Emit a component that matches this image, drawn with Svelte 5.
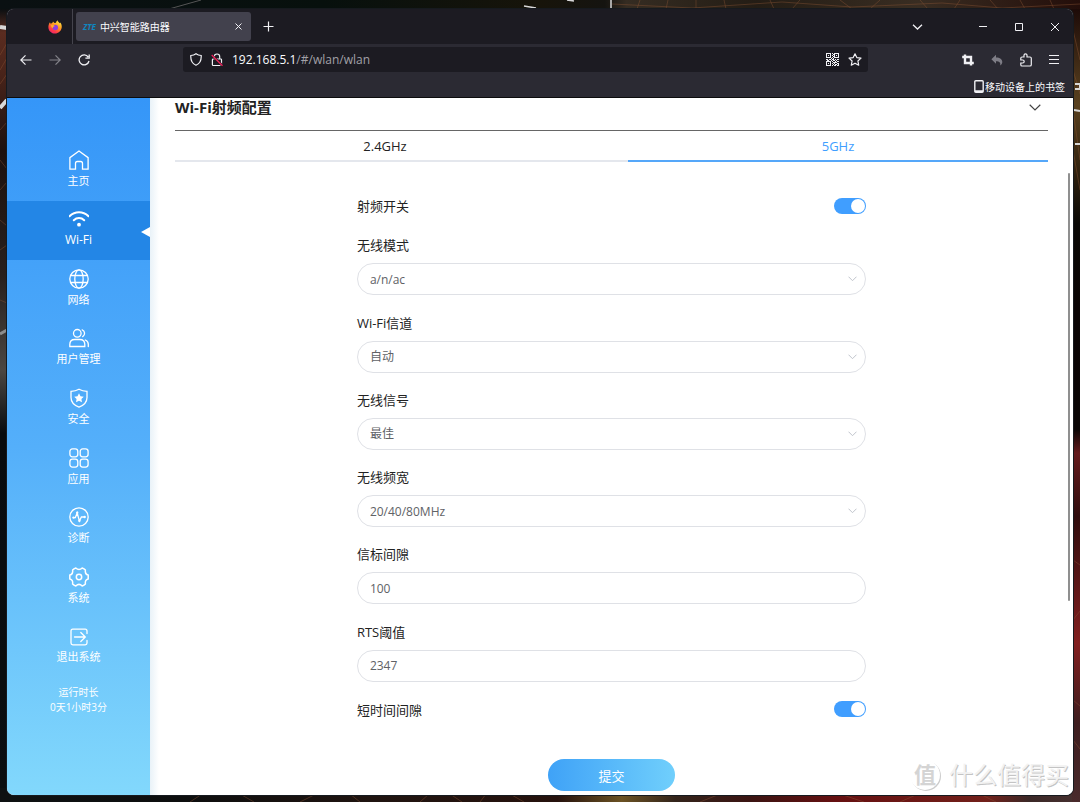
<script>
  const menu = [
    { id: 'home', label: '主页' },
    { id: 'wifi', label: 'Wi-Fi' },
    { id: 'network', label: '网络' },
    { id: 'users', label: '用户管理' },
    { id: 'security', label: '安全' },
    { id: 'apps', label: '应用' },
    { id: 'diagnose', label: '诊断' },
    { id: 'system', label: '系统' },
    { id: 'logout', label: '退出系统' }
  ];

  const bands = ['2.4GHz', '5GHz'];

  const fields = [
    { id: 'mode', label: '无线模式', options: ['a/n/ac', 'a only', 'a/n'] },
    { id: 'channel', label: 'Wi-Fi信道', options: ['自动', '36', '40', '44', '48'] },
    { id: 'signal', label: '无线信号', options: ['最佳', '标准', '节能'] },
    { id: 'width', label: '无线频宽', options: ['20/40/80MHz', '20/40MHz', '20MHz'] },
    { id: 'beacon', label: '信标间隙' },
    { id: 'rts', label: 'RTS阈值' }
  ];

  let page = $state('wifi');
  let band = $state('5GHz');
  let values = $state({
    radio: true,
    mode: 'a/n/ac',
    channel: '自动',
    signal: '最佳',
    width: '20/40/80MHz',
    beacon: '100',
    rts: '2347',
    shortGap: true
  });

  // modules of the QR glyph, one string per row
  const qr = [
    '1111101011111',
    '1000100110001',
    '1010101010101',
    '1000100110001',
    '1111101011111',
    '0000010100000',
    '1101101101011',
    '0110010110100',
    '1111101001011',
    '1000100111100',
    '1010101010011',
    '1000100101101',
    '1111101011011'
  ];
</script>

<div class="desktop">
  <svg class="wallpaper" viewBox="0 0 1080 802" preserveAspectRatio="none" aria-hidden="true">
    <defs>
      <linearGradient id="wp-top">
        <stop offset="0" stop-color="#0a1012" />
        <stop offset=".3" stop-color="#07100d" />
        <stop offset=".5" stop-color="#17140a" />
        <stop offset=".56" stop-color="#151410" />
        <stop offset=".58" stop-color="#352c22" />
        <stop offset=".7" stop-color="#241d15" />
        <stop offset=".85" stop-color="#392d22" />
        <stop offset="1" stop-color="#240e0a" />
      </linearGradient>
      <linearGradient id="wp-left" x2="0" y2="1">
        <stop offset="0" stop-color="#0b0f11" />
        <stop offset=".03" stop-color="#5a2c20" />
        <stop offset=".08" stop-color="#4a241a" />
        <stop offset=".18" stop-color="#1d110e" />
        <stop offset=".34" stop-color="#28201d" />
        <stop offset=".46" stop-color="#4b4642" />
        <stop offset=".54" stop-color="#080b0e" />
        <stop offset="1" stop-color="#0b0e10" />
      </linearGradient>
      <linearGradient id="wp-right" x2="0" y2="1">
        <stop offset="0" stop-color="#1d0b08" />
        <stop offset=".12" stop-color="#5a4220" />
        <stop offset=".2" stop-color="#33230f" />
        <stop offset=".27" stop-color="#0b0906" />
        <stop offset=".38" stop-color="#0a0404" />
        <stop offset=".53" stop-color="#0a0505" />
        <stop offset=".56" stop-color="#651b1d" />
        <stop offset=".64" stop-color="#300d0e" />
        <stop offset=".8" stop-color="#821f1f" />
        <stop offset=".9" stop-color="#3e1e20" />
        <stop offset="1" stop-color="#492a2b" />
      </linearGradient>
      <linearGradient id="wp-bottom">
        <stop offset="0" stop-color="#0e1112" />
        <stop offset=".17" stop-color="#0d0e0e" />
        <stop offset=".35" stop-color="#201410" />
        <stop offset=".52" stop-color="#26120d" />
        <stop offset=".58" stop-color="#6b5223" />
        <stop offset=".63" stop-color="#33241b" />
        <stop offset=".7" stop-color="#3b1412" />
        <stop offset=".78" stop-color="#661011" />
        <stop offset=".92" stop-color="#72201a" />
        <stop offset=".96" stop-color="#3b2827" />
        <stop offset="1" stop-color="#452f2e" />
      </linearGradient>
    </defs>
    <rect width="1080" height="20" fill="url(#wp-top)" />
    <rect y="9" width="14" height="786" fill="url(#wp-left)" />
    <rect x="1060" y="9" width="20" height="793" fill="url(#wp-right)" />
    <rect y="788" width="1072" height="14" fill="url(#wp-bottom)" />
    <g fill="none" stroke="#8c5535" stroke-width=".6" opacity=".7">
      <path d="M612 4l80 4 90-6 70 5 90-4 60 5 78-4M640 0l-3 9M668 0l-2 9M696 0v9M724 0l2 9M770 0l4 9M800 0l-8 9M840 0l12 9M880 0l-10 9M920 0l8 9M960 0l-6 9M990 0l8 9M1020 0l5 9M1050 0l4 9" />
      <path d="M0 55l7-12M0 70l7-12M0 84l7-10M0 130l7-8M0 160l7 9M0 190l7-8M0 220l7 6M0 250l7-5M0 300l7 3M1073 30l7 30M1073 70l7 24M1073 110l7 50M1073 150l7 40M1073 560l7 5M1073 620l7-9M1073 700l7 6M1073 740l7 9" />
      <path d="M190 802l12-8M240 794l14 8M300 802l16-8M350 794l10 8M420 802l9-8M450 794l12 8M480 802l6-8M510 794l14 8M700 802l20-8M840 794l24 8M900 802l18-8M980 794l16 8" />
    </g>
    <g fill="none" stroke="#d8d8d8">
      <path d="M169 9l32-9" stroke="#555" />
      <path d="M524 6l12 2M567 0l7 1M611 0v9" stroke-width="1.5" />
      <path d="M0 27l7 1M0 108l7-8" stroke-width="4" />
      <path d="M0 334l7-4" stroke="#8c8c8c" stroke-width="3" />
      <path d="M1074 110l6 1M1075 144h5M1075 84h5v5h-5" stroke-width="2" />
    </g>
  </svg>

  <div class="window">
    <header class="browser">
      <div class="tab-strip">
        <div class="firefox-slot">
          <svg width="14" height="14" viewBox="0 0 14 14" aria-hidden="true">
            <defs>
              <linearGradient id="fx" x1=".8" y1="0" x2=".2" y2="1">
                <stop offset="0" stop-color="#fff04a" />
                <stop offset=".4" stop-color="#ff9a1f" />
                <stop offset=".75" stop-color="#ff3b47" />
                <stop offset="1" stop-color="#e81f78" />
              </linearGradient>
            </defs>
            <path d="M2 2.2l.6 1.5L4.300 3l.7-1.6 1.500 1.700L8 2.800C8.200 1.700 8.900.6 9.600.2c0 1.300 1.400 2 2.100 3l.5-.8C13.400 3.800 14 5.600 13.700 7.600 13.200 11.200 10.400 13.600 7 13.600S.5 11 .4 7.500C.3 5.500.9 3.500 2 2.200z" fill="url(#fx)" />
            <circle cx="7.300" cy="7.500" r="2.700" fill="#8b3fe0" />
            <path d="M3 5.200c1.700-.6 3 0 4 1.100-1.500-.1-2.200.8-1.900 1.900-1.300-.4-2-1.500-2.100-3z" fill="#ffb02a" />
          </svg>
        </div>
        <div class="tab">
          <span class="favicon">ZTE</span>
          <span class="tab-title">中兴智能路由器</span>
          <button class="icon-button" aria-label="关闭标签页">
            <svg width="7" height="7" viewBox="0 0 7 7"><path d="M.5.5l6 6M6.500.5l-6 6" /></svg>
          </button>
        </div>
        <button class="icon-button new-tab" aria-label="新建标签页">
          <svg width="11" height="11" viewBox="0 0 11 11"><path d="M5.500.5v10M.5 5.500h10" stroke-width="1.200" /></svg>
        </button>
        <div class="window-buttons">
          <button class="icon-button list-tabs" aria-label="列出所有标签页">
            <svg width="11" height="6" viewBox="0 0 11 6"><path d="M1 .7l4.500 4.300L10 .7" stroke-width="1.300" /></svg>
          </button>
          <button class="icon-button" aria-label="最小化">
            <svg width="8" height="8" viewBox="0 0 8 8"><path d="M0 3.500h8" /></svg>
          </button>
          <button class="icon-button" aria-label="最大化">
            <svg width="8" height="8" viewBox="0 0 8 8"><path d="M.5.5h7v7h-7z" /></svg>
          </button>
          <button class="icon-button" aria-label="关闭">
            <svg width="8" height="8" viewBox="0 0 8 8"><path d="M0 0l8 8M8 0L0 8" /></svg>
          </button>
        </div>
      </div>

      <div class="nav-bar">
        <div class="nav-buttons">
          <button class="icon-button" aria-label="后退">
            <svg width="12" height="12" viewBox="0 0 12 12"><path d="M11.500 6H1M5.500 1.300L.8 6l4.700 4.700" stroke-width="1.200" /></svg>
          </button>
          <button class="icon-button" aria-label="前进" disabled>
            <svg width="12" height="12" viewBox="0 0 12 12"><path d="M.5 6H11M6.500 1.300L11.200 6l-4.700 4.700" stroke-width="1.200" /></svg>
          </button>
          <button class="icon-button" aria-label="刷新">
            <svg width="12" height="12" viewBox="0 0 12 12"><path d="M10.200 3A5 5 0 1 0 11 7M11.200.4v3.800H7.400" stroke-width="1.300" /></svg>
          </button>
        </div>
        <div class="url-bar">
          <svg width="12" height="13" viewBox="0 0 12 13" aria-hidden="true"><path d="M6 .7c1.500 1.200 3.200 1.700 5.200 1.800C11.500 7.500 9.600 10.900 6 12.300 2.400 10.900.5 7.500.8 2.500 2.800 2.400 4.500 1.900 6 .7z" stroke-width="1.200" /></svg>
          <svg width="12" height="14" viewBox="0 0 12 14" aria-hidden="true">
            <path d="M3.300 6V3.700a2.700 2.700 0 0 1 5.400 0V6M2.200 6h7.600q.7 0 .7.700v5q0 .8-.7.800H2.200q-.8 0-.8-.8v-5q0-.7.8-.7z" stroke-width="1.200" />
            <path d="M.7 2l10.800 10.800" stroke="#1c1b22" stroke-width="2.400" />
            <path d="M.7 2l10.800 10.800" stroke="#f0215a" stroke-width="1.300" />
          </svg>
          <span class="url">192.168.5.1<span>/#/wlan/wlan</span></span>
          <svg class="qr" width="13" height="13" viewBox="0 0 13 13" aria-hidden="true">
            {#each qr as row, y}
              {#each row as cell, x}
                {#if cell === '1'}<rect {x} {y} width="1" height="1" />{/if}
              {/each}
            {/each}
          </svg>
          <svg width="14" height="13" viewBox="0 0 14 13" aria-hidden="true"><path d="M7 .8l1.800 3.800 4.200.5L9.900 8l.8 4.200L7 10.200l-3.700 2L4.100 8 1 5.100l4.200-.5z" stroke-width="1.200" stroke-linejoin="round" /></svg>
        </div>
        <div class="tools">
          <button class="icon-button" aria-label="截图">
            <svg width="12" height="12" viewBox="0 0 12 12"><path d="M3 .5V9h8.800M.2 3H9v8.600" stroke-width="2.400" /></svg>
          </button>
          <button class="icon-button" aria-label="撤销" disabled>
            <svg width="12" height="12" viewBox="0 0 12 12"><path d="M5 .8v2.700c4 0 6.300 2 6.300 4.600 0 1.500-.8 2.700-2.100 3.300.6-3-1-4.200-4.200-4.200v2.600L.4 5.300z" fill="#7e7d86" stroke="none" /></svg>
          </button>
          <button class="icon-button" aria-label="扩展">
            <svg width="12" height="14" viewBox="0 0 12 14"><path d="M4 4V2.300a1.500 1.500 0 0 1 3 0V4h3q1.300 0 1.300 1.300v6.400q0 1.300-1.300 1.300H2Q.8 13 .8 11.700V10h1.900a1.500 1.500 0 0 0 0-3H.8V5.300Q.8 4 2 4z" stroke-width="1.200" /></svg>
          </button>
          <button class="icon-button" aria-label="菜单">
            <svg width="10" height="9" viewBox="0 0 10 9"><path d="M0 .5h10M0 4.500h10M0 8.500h10" /></svg>
          </button>
        </div>
      </div>

      <div class="bookmarks">
        <a href="#bookmarks">
          <svg width="10" height="13" viewBox="0 0 10 13" aria-hidden="true"><path d="M1.800.8h6.400q1 0 1 1v9.400q0 1-1 1H1.800q-1 0-1-1V1.800q0-1 1-1zM1 11h8" stroke-width="1.400" /></svg>
          移动设备上的书签
        </a>
      </div>
    </header>

    <div class="page">
      <aside>
        <nav>
          {#each menu as item}
            <a href="#{item.id}" class:active={page === item.id} onclick={() => (page = item.id)}>
              <svg width="20" height="20" viewBox="0 0 20 20" aria-hidden="true">
                {#if item.id === 'home'}
                  <path d="M10 1L.9 7.600v11.600h5.600v-5.700q0-2 1.800-2h3.400q1.800 0 1.800 2v5.700h5.600V7.600z" />
                {:else if item.id === 'wifi'}
                  <path d="M.5 7.200C6 1.800 14 1.800 19.500 7.200M4.800 11.200c3-2.900 7.400-2.900 10.400 0" stroke-width="2" />
                  <circle class="solid" cx="10" cy="15.700" r="1.900" />
                {:else if item.id === 'network'}
                  <circle cx="10" cy="10" r="9.200" />
                  <ellipse cx="10" cy="10" rx="4.200" ry="9.200" />
                  <path d="M1.600 6.500h16.800M1.600 13.500h16.800" />
                {:else if item.id === 'users'}
                  <circle cx="8.300" cy="5.300" r="3.800" />
                  <path d="M.8 18.500v-2q0-5 5-5h5q5 0 5 5v2zM13.200 1.800a3.800 3.800 0 0 1 .5 6.800M16.300 12q3 1.300 3 4.300v2.200" />
                {:else if item.id === 'security'}
                  <path d="M10 1.200q3.500 2 8 2.200v6q0 6.500-8 9.700Q2 15.900 2 9.400v-6q4.500-.2 8-2.200z" />
                  <path class="solid" d="M10 5.200l1.500 3 3.300.5-2.400 2.300.6 3.300L10 12.700l-3 1.600.6-3.300-2.400-2.300 3.300-.5z" />
                {:else if item.id === 'apps'}
                  <rect x=".9" y=".9" width="7.900" height="7.900" rx="2.500" />
                  <rect x="11.200" y=".9" width="7.900" height="7.900" rx="2.500" />
                  <rect x=".9" y="11.200" width="7.900" height="7.900" rx="2.500" />
                  <rect x="11.200" y="11.200" width="7.900" height="7.900" rx="2.500" />
                {:else if item.id === 'diagnose'}
                  <circle cx="10" cy="10" r="9.200" />
                  <path d="M4.500 10.600h1.800L8.200 6l2.200 8 2-4h3" />
                  <g class="solid">
                    <circle cx="4.500" cy="10.600" r="1.200" />
                    <circle cx="8.200" cy="5.800" r="1.200" />
                    <circle cx="10.400" cy="13.800" r="1.200" />
                    <circle cx="15.700" cy="10" r="1.200" />
                  </g>
                {:else if item.id === 'system'}
                  <path d="M6.800 1Q10 4.200 13.200 1q2 .6 3.200 2-.7 4.200 2.800 5v4q-3.500.8-2.800 5-1.200 1.400-3.200 2-3.200-3.200-6.400 0-2-.6-3.200-2 .7-4.200-2.800-5V8q3.500-.8 2.800-5Q4.800 1.600 6.800 1z" stroke-width="1.500" stroke-linejoin="round" />
                  <circle cx="10" cy="10" r="2.700" stroke-width="1.500" />
                {:else}
                  <path d="M18 7.500V5q0-1.800-1.800-1.800H3.800Q2 3.200 2 5v12q0 1.800 1.800 1.800h12.400Q18 18.800 18 17v-2.500M5.500 11h10.500M11.800 6.500l4.500 4.500-4.500 4.500" />
                {/if}
              </svg>
              <span>{item.label}</span>
            </a>
          {/each}
        </nav>
        <p>运行时长<br />0天1小时3分</p>
      </aside>

      <main>
        <div class="section-title">
          <h1>Wi-Fi射频配置</h1>
          <button class="collapse" aria-label="折叠">
            <svg width="12" height="7" viewBox="0 0 12 7"><path d="M.7.8L6 6 11.300.8" /></svg>
          </button>
        </div>

        <div class="bands" role="tablist">
          {#each bands as name}
            <button role="tab" aria-selected={band === name} class:active={band === name} onclick={() => (band = name)}>
              {name}
            </button>
          {/each}
        </div>

        <form onsubmit={(e) => e.preventDefault()}>
          <div class="rows">
            <div class="switch-row">
              <label for="radio">射频开关</label>
              <input id="radio" type="checkbox" bind:checked={values.radio} />
            </div>
            {#each fields as field}
              <div class="field">
                <label for={field.id}>{field.label}</label>
                {#if field.options}
                  <div class="select-box">
                    <select id={field.id} bind:value={values[field.id]}>
                      {#each field.options as option}
                        <option>{option}</option>
                      {/each}
                    </select>
                    <svg width="9" height="6" viewBox="0 0 9 6" aria-hidden="true"><path d="M.5.7l4 4 4-4" /></svg>
                  </div>
                {:else}
                  <input id={field.id} type="text" bind:value={values[field.id]} />
                {/if}
              </div>
            {/each}
            <div class="switch-row">
              <label for="shortGap">短时间间隙</label>
              <input id="shortGap" type="checkbox" bind:checked={values.shortGap} />
            </div>
          </div>
          <button class="submit" type="submit">提交</button>
        </form>

        <div class="scroll-thumb"></div>
        <div class="watermark"><span class="seal">值</span>什么值得买</div>
      </main>
    </div>
  </div>
</div>

<style>
  :global(body) {
    margin: 0;
    background: #0b0e10;
  }

  .desktop {
    position: relative;
    box-sizing: border-box;
    min-height: 100vh;
    padding: 9px 7px 7px;
    display: flex;
    font-family: 'Open Sans', 'Noto Sans CJK SC', sans-serif;
    font-size: 13px;
    color: #222;
  }

  .wallpaper {
    position: absolute;
    inset: 0;
    width: 100%;
    height: 100%;
  }

  .window {
    position: relative;
    flex: 1;
    min-width: 0;
    display: flex;
    flex-direction: column;
    border-radius: 7px;
    overflow: hidden;
    background: #fff;
    box-shadow: 0 0 0 1px #161a1f;
  }

  button {
    font: inherit;
    border: 0;
    padding: 0;
    background: none;
    cursor: pointer;
  }

  svg {
    display: block;
    flex: none;
  }

  /* browser chrome */
  .browser {
    background: #2b2a33;
    color: #fbfbfe;
    border-bottom: 1px solid #0c0c0d;
  }

  .browser svg {
    fill: none;
    stroke: #f0f0f4;
  }

  .browser .firefox-slot svg,
  .browser .qr {
    stroke: none;
  }

  .browser .qr {
    fill: #f0f0f4;
  }

  .tab-strip {
    display: flex;
    align-items: center;
    height: 35px;
    background: #1c1b22;
  }

  .firefox-slot {
    box-sizing: border-box;
    width: 66px;
    height: 35px;
    padding-left: 41px;
    display: flex;
    align-items: center;
    border-right: 1px solid #45444d;
  }

  .tab {
    box-sizing: border-box;
    width: 175px;
    height: 29px;
    margin-left: 3px;
    padding: 0 9px 0 7px;
    display: flex;
    align-items: center;
    gap: 4px;
    border-radius: 3px;
    background: #42414d;
  }

  .favicon {
    font-size: 8px;
    font-weight: 700;
    font-style: italic;
    color: #0f86c0;
  }

  .tab-title {
    flex: 1;
    font-size: 10px;
    white-space: nowrap;
  }

  .new-tab {
    margin-left: 12px;
  }

  .icon-button {
    display: flex;
    align-items: center;
    justify-content: center;
  }

  .icon-button:disabled {
    opacity: 0.45;
  }

  .tools .icon-button:disabled {
    opacity: 1;
  }

  .window-buttons {
    display: flex;
    margin-left: auto;
  }

  .window-buttons .icon-button {
    width: 36px;
    height: 35px;
  }

  .window-buttons .list-tabs {
    margin-right: 30px;
  }

  .nav-bar {
    display: flex;
    align-items: center;
    height: 31px;
  }

  .nav-buttons {
    box-sizing: border-box;
    width: 176px;
    padding-left: 13px;
    display: flex;
    gap: 17px;
  }

  .url-bar {
    flex: 1;
    box-sizing: border-box;
    height: 25px;
    padding: 0 6px 0 7px;
    display: flex;
    align-items: center;
    gap: 9px;
    border-radius: 3px;
    background: #1c1b22;
  }

  .url {
    flex: 1;
    font-size: 12px;
  }

  .url span {
    color: #a2a1a8;
  }

  .tools {
    box-sizing: border-box;
    width: 205px;
    padding-right: 14px;
    display: flex;
    align-items: center;
    justify-content: flex-end;
    gap: 17px;
  }

  .bookmarks {
    display: flex;
    justify-content: flex-end;
    align-items: center;
    height: 22px;
    padding-right: 8px;
  }

  .bookmarks a {
    display: flex;
    align-items: center;
    gap: 1px;
    font-size: 10px;
    color: inherit;
    text-decoration: none;
  }

  /* router page */
  .page {
    flex: 1;
    display: flex;
  }

  aside {
    width: 143px;
    background: linear-gradient(#3596f8, #54affa 50%, #82d8fc);
    color: #fff;
    text-align: center;
  }

  nav {
    display: grid;
    grid-auto-rows: 1fr;
    min-height: 536px;
    padding-top: 43px;
  }

  nav a {
    position: relative;
    display: flex;
    flex-direction: column;
    align-items: center;
    justify-content: center;
    gap: 3px;
    padding-bottom: 3px;
    font-size: 11px;
    line-height: 16px;
    color: inherit;
    text-decoration: none;
  }

  nav svg {
    fill: none;
    stroke: #fff;
    stroke-width: 1.3;
    stroke-linecap: round;
  }

  nav svg .solid {
    fill: #fff;
    stroke: none;
  }

  nav a.active {
    background: #2386e6;
    font-size: 12px;
  }

  nav a.active::after {
    content: '';
    position: absolute;
    right: 0;
    top: 26px;
    border: 5px solid transparent;
    border-right: 9px solid #fff;
    border-left: 0;
  }

  aside p {
    margin: 8px 0 0;
    font-size: 10px;
    line-height: 15px;
  }

  main {
    position: relative;
    flex: 1;
    display: flex;
    flex-direction: column;
    padding: 0 25px 4px;
    background: linear-gradient(90deg, #e9f2f8, #fff 9px);
  }

  .section-title {
    display: flex;
    justify-content: space-between;
    align-items: center;
    height: 32px;
    padding-right: 7px;
    border-bottom: 1px solid #666;
  }

  .section-title h1 {
    margin: 0 0 14px;
    font-size: 15px;
    line-height: 20px;
    font-weight: 700;
  }

  .collapse {
    margin-bottom: 14px;
  }

  .collapse svg {
    fill: none;
    stroke: #444;
    stroke-width: 1.2;
  }

  .bands {
    display: flex;
    gap: 33px;
    box-shadow: inset 0 -2px #e4e7ed;
  }

  .bands button {
    flex: 1;
    height: 31px;
    padding-top: 1px;
    border-bottom: 2px solid transparent;
    line-height: 18px;
    color: #222;
  }

  .bands button.active {
    color: #409eff;
    border-color: #55a7f9;
  }

  form {
    flex: 1;
    display: flex;
    flex-direction: column;
    width: calc(100% * 14 / 24);
    margin: 0 auto;
    padding-top: 33px;
  }

  .rows {
    flex: 1;
    display: flex;
    flex-direction: column;
    justify-content: space-between;
  }

  .switch-row {
    display: flex;
    justify-content: space-between;
    align-items: center;
    height: 21px;
  }

  .switch-row:first-child {
    margin-bottom: 2px;
  }

  .field label {
    display: block;
    line-height: 20px;
    margin-bottom: 8px;
  }

  .field input,
  .field select {
    display: block;
    box-sizing: border-box;
    width: 100%;
    height: 32px;
    padding: 0 12px;
    border: 1px solid #dfe1e6;
    border-radius: 16px;
    background: #fff;
    font: inherit;
    font-size: 12px;
    color: #606266;
    appearance: none;
    outline: none;
  }

  .select-box {
    position: relative;
  }

  .select-box svg {
    position: absolute;
    right: 9px;
    top: 13px;
    fill: none;
    stroke: #c0c4cc;
    pointer-events: none;
  }

  .switch-row input {
    appearance: none;
    width: 32px;
    height: 16px;
    margin: 0;
    border-radius: 8px;
    background: #dcdfe6;
    cursor: pointer;
  }

  .switch-row input::before {
    content: '';
    display: block;
    width: 14px;
    height: 14px;
    margin: 1px;
    border-radius: 50%;
    background: #fff;
  }

  .switch-row input:checked {
    background: #409eff;
  }

  .switch-row input:checked::before {
    margin-left: 17px;
  }

  .submit {
    width: 25%;
    height: 32px;
    margin: 39px auto 0;
    border-radius: 16px;
    background: linear-gradient(90deg, #3fa2f7, #70cffc);
    color: #fff;
  }

  .scroll-thumb {
    position: absolute;
    right: 3px;
    top: 75px;
    width: 2px;
    height: 428px;
    border-radius: 1px;
    background: #8f8f8f;
  }

  .watermark {
    position: absolute;
    right: 4px;
    bottom: 4px;
    display: flex;
    align-items: center;
    gap: 9px;
    font-size: 24px;
    line-height: 32px;
    color: #f2f2f2;
    text-shadow: 1px 1px 0 #c4c4c4;
    white-space: nowrap;
    pointer-events: none;
  }

  .seal {
    width: 30px;
    height: 30px;
    border-radius: 50%;
    box-shadow: 1px 1px 0 #ccc;
    font-size: 22px;
    font-weight: 700;
    line-height: 28px;
    text-align: center;
    color: #d4d4d4;
    text-shadow: none;
  }
</style>
